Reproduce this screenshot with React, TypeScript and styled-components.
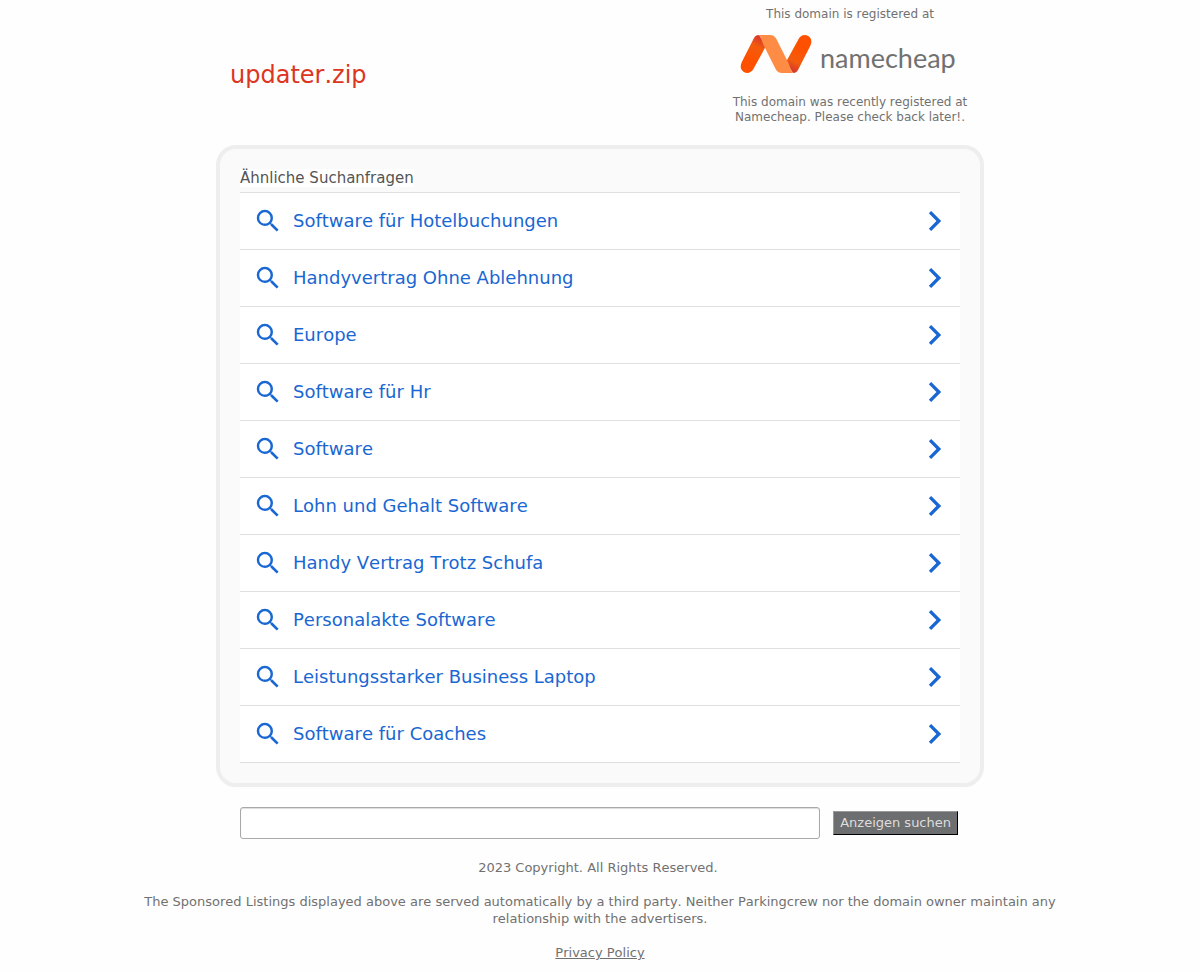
import React from "react";
import styled, { createGlobalStyle } from "styled-components";

const GlobalStyle = createGlobalStyle`
  *, *::before, *::after { box-sizing: border-box; }
  body {
    margin: 0;
    background: #fefefe;
    color: #717171;
    font-family: "DejaVu Sans", Verdana, sans-serif;
    font-size: 13px;
    font-kerning: none;
    line-height: 17px;
  }
`;

const Page = styled.div`
  width: 100%;
  max-width: 768px;
  margin: 0 auto;
`;

const Header = styled.header`
  display: flex;
  justify-content: space-between;
  align-items: flex-start;
  padding: 7px 4px 20px 14px;
`;

const DomainName = styled.h1`
  margin: 54px 0 0;
  color: #dc3522;
  font-size: 24px;
  font-weight: 400;
  line-height: 28px;
`;

const Registrar = styled.div`
  width: 260px;
  text-align: center;
  font-size: 12px;
  line-height: 15px;
`;

const RegistrarText = styled.p`
  margin: 0;
  padding: 0 8px;
`;

const Brand = styled.a`
  display: flex;
  align-items: center;
  gap: 8px;
  height: 73px;
  padding: 0 0 10px 20px;
  color: #717171;
  text-decoration: none;
`;

const BrandName = styled.span`
  font-family: Lato, sans-serif;
  font-size: 27px;
  line-height: 36px;
  padding-top: 8px;
`;

const Panel = styled.main`
  padding: 20px;
  background: #fafafa;
  border: 4px solid #eeeeee;
  border-radius: 20px;
`;

const PanelTitle = styled.h2`
  width: fit-content;
  margin: 0 0 5px;
  background: #ffffff;
  color: #555555;
  font-size: 15px;
  font-weight: 400;
  line-height: 18px;
`;

const ResultList = styled.ul`
  margin: 0;
  padding: 0;
  list-style: none;
  background: #ffffff;
  border-top: 1px solid #dfdfe1;
`;

const ResultItem = styled.li`
  border-bottom: 1px solid #dfdfe1;
`;

const ResultLink = styled.a`
  display: flex;
  align-items: center;
  gap: 10px;
  height: 56px;
  padding: 0 5px 0 13px;
  color: #1967d2;
  font-size: 18px;
  line-height: 24px;
  text-decoration: none;
`;

const ResultLabel = styled.span`
  flex: 1;
`;

const SearchForm = styled.form`
  display: flex;
  align-items: center;
  gap: 13px;
  padding: 20px 26px 20px 24px;
`;

const SearchInput = styled.input`
  flex: 1;
  min-width: 0;
  height: 32px;
  padding: 4px 8px;
  background: #ffffff;
  border: 1px solid #a9a9a9;
  border-radius: 3px;
  box-shadow: inset 0 1px 1px #dddddd;
  font: inherit;
`;

const SearchButton = styled.button`
  height: 24px;
  padding: 0 6px;
  background: #6d6e70;
  border: 1px solid;
  border-color: #999999 #000000 #000000 #999999;
  color: #dddddd;
  font: inherit;
  line-height: 20px;
`;

const Footer = styled.footer`
  width: 80%;
  margin: 0 auto;
  padding-bottom: 13px;
  text-align: center;
`;

const FooterText = styled.p`
  margin: 0 0 17px;
`;

const PrivacyLink = styled.a`
  color: inherit;
  text-decoration: underline;
`;

const searches = [
  "Software für Hotelbuchungen",
  "Handyvertrag Ohne Ablehnung",
  "Europe",
  "Software für Hr",
  "Software",
  "Lohn und Gehalt Software",
  "Handy Vertrag Trotz Schufa",
  "Personalakte Software",
  "Leistungsstarker Business Laptop",
  "Software für Coaches",
];

const SearchIcon = () => (
  <svg width="30" height="30" viewBox="0 0 24 24" fill="currentColor" aria-hidden="true">
    <path d="M15.5 14h-.79l-.28-.27A6.47 6.47 0 0 0 16 9.5 6.5 6.5 0 1 0 9.5 16c1.61 0 3.09-.59 4.23-1.57l.27.28v.79l5 4.99L20.49 19l-4.99-5zm-6 0C7.01 14 5 11.99 5 9.5S7.01 5 9.5 5 14 7.01 14 9.5 11.99 14 9.5 14z" />
  </svg>
);

const ChevronIcon = () => (
  <svg width="40" height="40" viewBox="0 0 24 24" fill="currentColor" aria-hidden="true">
    <path d="M9.7 6L8.29 7.41 12.87 12l-4.58 4.59L9.7 18l6-6z" />
  </svg>
);

const BrandMark = () => (
  <svg width="72" height="38" viewBox="0 0 72 38" aria-hidden="true">
    <defs>
      <linearGradient id="leftStroke" x1="6" y1="36" x2="22" y2="4" gradientUnits="userSpaceOnUse">
        <stop offset="0.35" stopColor="#ff5000" />
        <stop offset="0.75" stopColor="#f25c0c" />
        <stop offset="1" stopColor="#d93a2b" />
      </linearGradient>
      <linearGradient id="rightStroke" x1="66" y1="2" x2="50" y2="34" gradientUnits="userSpaceOnUse">
        <stop offset="0.35" stopColor="#ff5000" />
        <stop offset="0.75" stopColor="#f25c0c" />
        <stop offset="1" stopColor="#d93a2b" />
      </linearGradient>
    </defs>
    <path d="M19 0C16.500 0 15 1 14 3L1.800 27C-.2 31.500.5 35 3.800 37C7.500 39 11.500 37.500 13.400 34L26 11Z" fill="url(#leftStroke)" />
    <path d="M53 38C55.500 38 57 37 58 35L70.200 11C72.200 6.500 71.500 3 68.200 1C64.500-1 60.500.5 58.600 4L46 27Z" fill="url(#rightStroke)" />
    <path d="M18 0H30C33 0 35 1.200 36.400 4L48 27C50.500 32 51 38 54 38H42C39 38 37 36.800 35.600 34L24 11C21.500 6 21 0 18 0Z" fill="#ff8c44" />
  </svg>
);

export default function App() {
  return (
    <>
      <GlobalStyle />
      <Page>
        <Header>
          <DomainName>updater.zip</DomainName>
          <Registrar>
            <RegistrarText>This domain is registered at</RegistrarText>
            <Brand href="#namecheap">
              <BrandMark />
              <BrandName>namecheap</BrandName>
            </Brand>
            <RegistrarText>
              This domain was recently registered at Namecheap. Please check back later!.
            </RegistrarText>
          </Registrar>
        </Header>
        <Panel>
          <PanelTitle>Ähnliche Suchanfragen</PanelTitle>
          <ResultList>
            {searches.map((label) => (
              <ResultItem key={label}>
                <ResultLink href="#search">
                  <SearchIcon />
                  <ResultLabel>{label}</ResultLabel>
                  <ChevronIcon />
                </ResultLink>
              </ResultItem>
            ))}
          </ResultList>
        </Panel>
        <SearchForm onSubmit={(event) => event.preventDefault()}>
          <SearchInput type="text" aria-label="Suche" />
          <SearchButton type="submit">Anzeigen suchen</SearchButton>
        </SearchForm>
      </Page>
      <Footer>
        <FooterText>2023 Copyright. All Rights Reserved.&nbsp;</FooterText>
        <FooterText>
          The Sponsored Listings displayed above are served automatically by a third party. Neither
          Parkingcrew nor the domain owner maintain any relationship with the advertisers.
        </FooterText>
        <PrivacyLink href="#privacy">Privacy Policy</PrivacyLink>
      </Footer>
    </>
  );
}
